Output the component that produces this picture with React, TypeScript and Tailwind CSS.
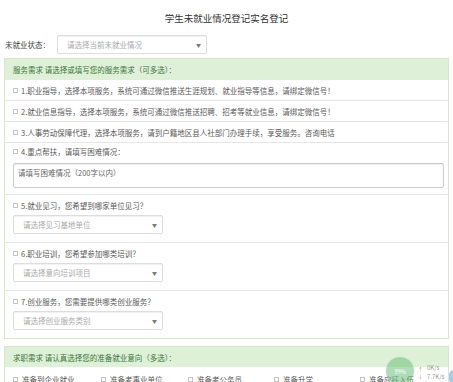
import React from "react";

const FONT = '"Noto Sans CJK SC", "Noto Sans", "Liberation Sans", sans-serif';

function Check() {
  return <span className="inline-block h-[5px] w-[5px] shrink-0 border border-[#c4c4c4] bg-white" />;
}

function Select({ placeholder, width }: { placeholder: string; width: string }) {
  return (
    <div
      className={`flex h-[19px] items-center justify-between rounded-[2px] border border-[#ddd] bg-white pl-[9px] pr-[5px] shadow-[inset_0_1px_1px_rgba(0,0,0,0.06)] ${width}`}
    >
      <span className="text-[#aaa]">{placeholder}</span>
      <span className="text-[5px] text-[#777]">▼</span>
    </div>
  );
}

const rows = [
  "1.职业指导，选择本项服务，系统可通过微信推送生涯规划、就业指导等信息，请绑定微信号！",
  "2.就业信息指导，选择本项服务，系统可通过微信推送招聘、招考等就业信息，请绑定微信号！",
  "3.人事劳动保障代理，选择本项服务，请到户籍地区县人社部门办理手续，享受服务。咨询电话",
];

const selects = [
  { label: "5.就业见习，您希望到哪家单位见习？", placeholder: "请选择见习基地单位" },
  { label: "6.职业培训，您希望参加哪类培训？", placeholder: "请选择意向培训项目" },
  { label: "7.创业服务，您需要提供哪类创业服务？", placeholder: "请选择创业服务类别" },
];

const intents = ["准备到企业就业", "准备考事业单位", "准备考公务员", "准备升学", "准备应征入伍"];

export default function App() {
  return (
    <div
      className="relative h-[382px] w-[453px] overflow-hidden bg-white text-[7.5px] leading-[11px] text-[#5a5a5a]"
      style={{ fontFamily: FONT }}
    >
      <h1 className="pt-[12px] text-center text-[9.5px] leading-[13px] text-[#333]">学生未就业情况登记实名登记</h1>

      <div className="mt-[10px] flex items-center pl-[5px]">
        <span className="w-[52px] text-[#444]">未就业状态：</span>
        <Select placeholder="请选择当前未就业情况" width="w-[150px]" />
      </div>

      <div className="mx-[4px] mt-[4px] border border-[#d6e9c6]">
        <div className="flex h-[21px] items-center bg-[#dff0d8] pl-[8px] text-[#3c763d]">
          服务需求 请选择或填写您的服务需求（可多选）：
        </div>
        {rows.map((r) => (
          <div key={r} className="flex h-[21px] items-center gap-[3px] border-b border-[#e6e6e6] pl-[8px]">
            <Check />
            <span>{r}</span>
          </div>
        ))}
        <div className="border-b border-[#e6e6e6] pb-[6px] pl-[8px] pr-[4px] pt-[3px]">
          <div className="flex items-center gap-[3px]">
            <Check />
            <span>4.重点帮扶，请填写困难情况：</span>
          </div>
          <div className="mt-[6px] h-[25px] rounded-[2px] border border-[#ccc] px-[4px] pt-[3px] text-[#666] shadow-[inset_0_1px_1px_rgba(0,0,0,0.08)]">
            请填写困难情况（200字以内）
          </div>
        </div>
        {selects.map((s, i) => (
          <div
            key={s.label}
            className={`pb-[8px] pl-[8px] pt-[5px] ${i < selects.length - 1 ? "border-b border-[#e6e6e6]" : ""}`}
          >
            <div className="flex items-center gap-[3px]">
              <Check />
              <span>{s.label}</span>
            </div>
            <div className="mt-[4px]">
              <Select placeholder={s.placeholder} width="w-[150px]" />
            </div>
          </div>
        ))}
      </div>

      <div className="mx-[4px] mt-[7px] border border-[#d6e9c6]">
        <div className="flex h-[20px] items-center bg-[#dff0d8] pl-[8px] text-[#3c763d]">
          求职需求 请认真选择您的准备就业意向（多选）：
        </div>
        <div className="grid grid-cols-[88px_87px_86px_86px_1fr] pl-[8px] pt-[8px] leading-[9px]">
          {intents.map((t) => (
            <div key={t} className="flex items-center gap-[4px]">
              <Check />
              <span>{t}</span>
            </div>
          ))}
        </div>
      </div>

      {/* floating network speed widget */}
      <div className="absolute left-[386px] top-[357px] flex items-start">
        <div className="flex h-[28px] w-[28px] items-center justify-center rounded-full bg-[#6cbf7a]/55 text-[6px] text-white">
          39%
        </div>
        <div className="ml-[4px] mt-[8px] flex flex-col text-[5px] leading-[7px] text-[#e07070]">
          <span>↑</span>
          <span>↓</span>
        </div>
        <div className="ml-[4px] mt-[6px] flex flex-col text-[6px] leading-[9px] text-[#999]">
          <span>0K/s</span>
          <span>7.7K/s</span>
        </div>
      </div>
      <div className="absolute left-[449px] top-[370px] h-[14px] w-[10px] rounded-full bg-[#7fb3e8]/70" />
    </div>
  );
}
